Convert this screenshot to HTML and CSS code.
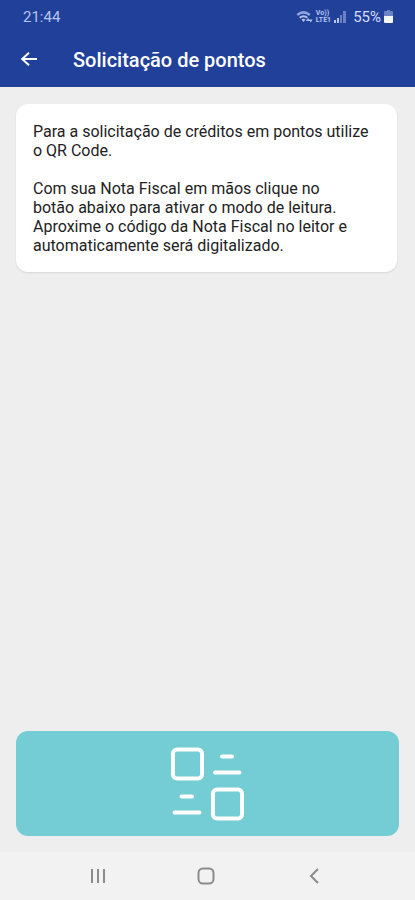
FILE: index.html
```html
<!DOCTYPE html>
<html lang="pt-BR">
<head>
<meta charset="utf-8">
<meta name="viewport" content="width=device-width, initial-scale=1">
<title>Solicitação de pontos</title>
<link rel="stylesheet" href="styles.css">
</head>
<body>
<div class="screen">
  <header class="top">
    <div class="status">
      <time>21:44</time>
      <div class="status-icons">
        <svg width="17" height="14" viewBox="0 0 17 14" aria-hidden="true">
          <path d="M.5 4Q7.500-2 14.500 4L13 6Q7.500 1.500 2 6z" fill="currentColor" opacity=".75"/>
          <path d="M3 7Q7.500 3.500 12 7L10.800 8.500Q7.500 6 4.200 8.500z" fill="currentColor"/>
          <path d="M5.500 9.500Q7.500 8 9.500 9.500L7.500 12zM10 11l2-3L14 11zM13 9.500h3.500L14.800 12.500z" fill="currentColor"/>
        </svg>
        <span class="volte"><span>Vo))</span><span>LTE1</span></span>
        <svg width="12" height="13" viewBox="0 0 12 13" aria-hidden="true">
          <path d="M0 10h2v3H0zM3 8h2v5H3z" fill="currentColor"/><path d="M6 5h2v8H6zM9 1h3v12H9z" fill="currentColor" opacity=".5"/>
        </svg>
        <span class="percent">55%</span>
        <svg width="9" height="13" viewBox="0 0 9 13" aria-hidden="true">
          <path d="M3 0h3v1h2q1 0 1 1v4H0V2q0-1 1-1h2z" fill="currentColor" opacity=".5"/><path d="M0 6h9v6q0 1-1 1H1q-1 0-1-1z" fill="#f3f6ff"/>
        </svg>
      </div>
    </div>
    <div class="bar">
      <button class="back" type="button" aria-label="Voltar">
        <svg width="18" height="16" viewBox="0 0 18 16" aria-hidden="true"><path d="M17 7H2.500M9 .8L2.200 7L9 13.200" fill="none" stroke="currentColor" stroke-width="2"/></svg>
      </button>
      <h1>Solicitação de pontos</h1>
    </div>
  </header>
  <main>
    <section class="card">
      <p>Para a solicitação de créditos em pontos utilize<br>o QR Code.</p>
      <p>Com sua Nota Fiscal em mãos clique no<br>botão abaixo para ativar o modo de leitura.<br>Aproxime o código da Nota Fiscal no leitor e<br>automaticamente será digitalizado.</p>
    </section>
    <button class="scan" type="button" aria-label="Ler QR Code">
      <svg width="74" height="74" viewBox="0 0 74 74" aria-hidden="true">
        <g fill="none" stroke="currentColor" stroke-width="4" stroke-linecap="round">
          <rect x="2" y="2.500" width="29" height="29" rx="4"/>
          <rect x="42" y="42.500" width="29" height="29" rx="4"/>
          <path d="M51 9.500H61M44 25.500H68.500M10.500 49.500H21M3.500 65.500H28.500"/>
        </g>
      </svg>
    </button>
  </main>
  <nav aria-label="Sistema">
    <button type="button" aria-label="Recentes"><svg width="18" height="16" viewBox="0 0 18 16" aria-hidden="true"><path d="M3 1v14M9 1v14M15 1v14" stroke="currentColor" stroke-width="2"/></svg></button>
    <button type="button" aria-label="Início"><svg width="18" height="18" viewBox="0 0 18 18" aria-hidden="true"><rect x="1.500" y="1.500" width="15" height="15" rx="4.500" fill="none" stroke="currentColor" stroke-width="2"/></svg></button>
    <button type="button" aria-label="Voltar"><svg width="18" height="16" viewBox="0 0 18 16" aria-hidden="true"><path d="M13 1L6 8l7 7" fill="none" stroke="currentColor" stroke-width="2"/></svg></button>
  </nav>
</div>
</body>
</html>
```
FILE: styles.css
```css
* { box-sizing: border-box; }
body {
  margin: 0;
  background: #eee;
  color: #222;
  font-family: Roboto, "Liberation Sans", sans-serif;
}
button {
  border: 0;
  padding: 0;
  background: none;
  color: inherit;
  cursor: pointer;
}
svg { display: block; }
.screen {
  min-height: 100vh;
  display: flex;
  flex-direction: column;
}
.top {
  background: #21409a;
  color: #fff;
}
.status {
  display: flex;
  justify-content: space-between;
  align-items: center;
  height: 33px;
  padding: 0 22px 0 23px;
  color: #b5c4ef;
  font-size: 15px;
}
.status-icons {
  display: flex;
  align-items: center;
  gap: 3px;
}
.volte {
  display: flex;
  flex-direction: column;
  font-size: 7px;
  line-height: 7px;
  font-weight: 700;
}
.percent {
  margin-left: 4px;
  font-size: 15px;
  color: #d3ddf8;
}
.bar {
  display: flex;
  align-items: center;
  height: 54px;
  padding: 0 20px;
}
.back {
  width: 53px;
  height: 40px;
  display: flex;
  align-items: center;
}
h1 {
  margin: 0;
  font-size: 20px;
  line-height: 24px;
  font-weight: 500;
}
main {
  flex: 1;
  display: flex;
  flex-direction: column;
  justify-content: space-between;
  gap: 16px;
  padding: 17px 16px 16px;
}
.card {
  margin-right: 2px;
  padding: 18px 17px 17px;
  border-radius: 12px;
  background: #fff;
  box-shadow: 0 1px 2px rgba(0, 0, 0, .1);
  font-size: 16px;
  line-height: 19px;
}
.card p { margin: 0; }
.card p + p { margin-top: 19px; }
.scan {
  display: flex;
  align-items: center;
  justify-content: center;
  padding: 16px 16px 15px;
  border-radius: 12px;
  background: #74ccd5;
  color: #fff;
}
nav {
  display: flex;
  justify-content: center;
  gap: 60px;
  height: 48px;
  padding-right: 4px;
  background: #f2f2f2;
  color: #8b8b8b;
}
nav button {
  display: flex;
  align-items: center;
  justify-content: center;
  width: 48px;
}
```
